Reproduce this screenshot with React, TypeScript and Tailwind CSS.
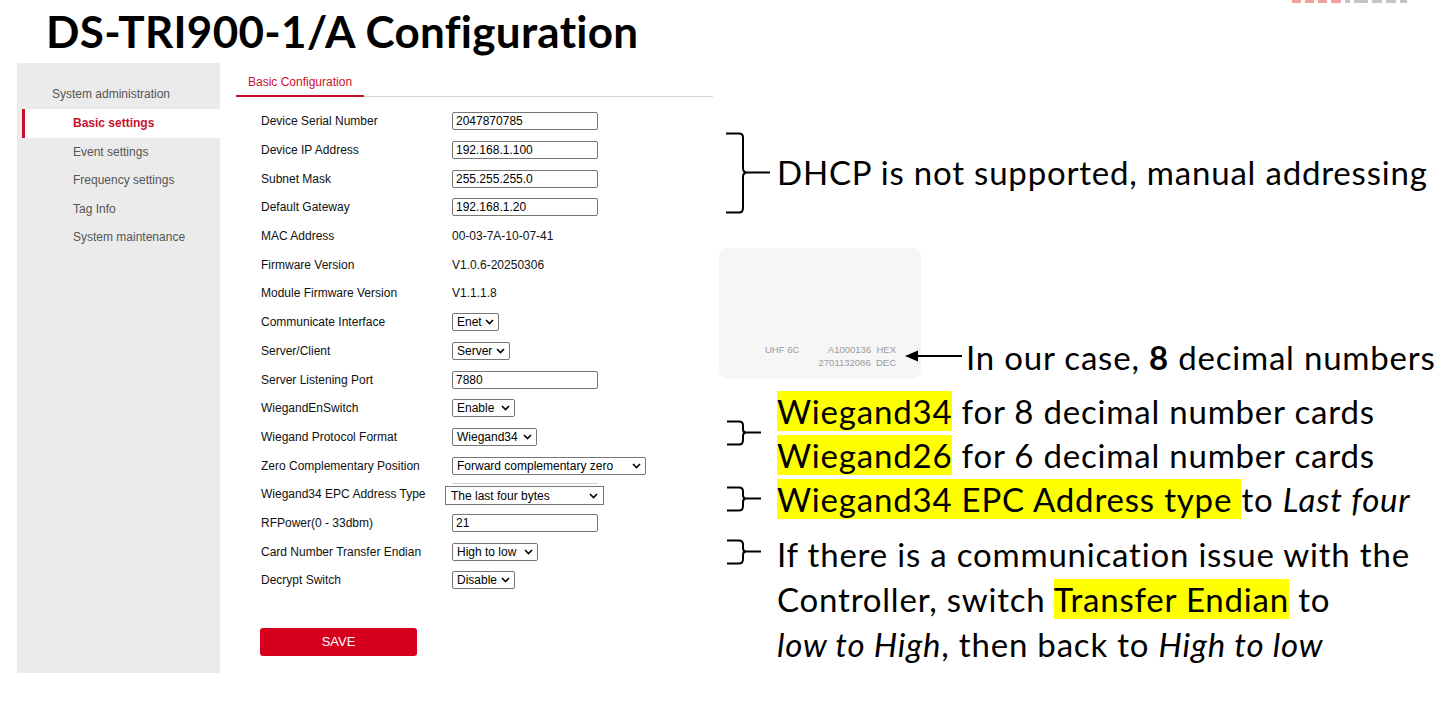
import type { ReactNode } from "react";

const uiFont = { fontFamily: '"Liberation Sans", Arial, sans-serif' };
const slideFont = { fontFamily: 'Lato, "Open Sans", sans-serif' };

type Field =
  | { label: string; kind: "input"; value: string }
  | { label: string; kind: "text"; value: string }
  | { label: string; kind: "select"; value: string; width: number };

const fields: Field[] = [
  { label: "Device Serial Number", kind: "input", value: "2047870785" },
  { label: "Device IP Address", kind: "input", value: "192.168.1.100" },
  { label: "Subnet Mask", kind: "input", value: "255.255.255.0" },
  { label: "Default Gateway", kind: "input", value: "192.168.1.20" },
  { label: "MAC Address", kind: "text", value: "00-03-7A-10-07-41" },
  { label: "Firmware Version", kind: "text", value: "V1.0.6-20250306" },
  { label: "Module Firmware Version", kind: "text", value: "V1.1.1.8" },
  { label: "Communicate Interface", kind: "select", value: "Enet", width: 47 },
  { label: "Server/Client", kind: "select", value: "Server", width: 58 },
  { label: "Server Listening Port", kind: "input", value: "7880" },
  { label: "WiegandEnSwitch", kind: "select", value: "Enable", width: 63 },
  { label: "Wiegand Protocol Format", kind: "select", value: "Wiegand34", width: 85 },
  { label: "Zero Complementary Position", kind: "select", value: "Forward complementary zero", width: 194 },
];

const fieldsAfter: Field[] = [
  { label: "RFPower(0 - 33dbm)", kind: "input", value: "21" },
  { label: "Card Number Transfer Endian", kind: "select", value: "High to low", width: 86 },
  { label: "Decrypt Switch", kind: "select", value: "Disable", width: 63 },
];

const menu = ["Basic settings", "Event settings", "Frequency settings", "Tag Info", "System maintenance"];

// bits of a logo that is cut off at the slide's top edge
const logoBits = [
  { w: 9, c: "bg-[#f3a0a0]" },
  { w: 9, c: "bg-[#f3a0a0]" },
  { w: 9, c: "bg-[#f3a0a0]" },
  { w: 10, c: "bg-[#f3a0a0]" },
  { w: 5, c: "bg-[#c4c4c4]" },
  { w: 14, c: "bg-[#c4c4c4]" },
  { w: 10, c: "bg-[#c4c4c4]" },
  { w: 10, c: "bg-[#c4c4c4]" },
  { w: 7, c: "bg-[#c4c4c4]" },
];

function Chevron() {
  return (
    <svg width="9" height="6" viewBox="0 0 9 6" className="shrink-0">
      <path d="M1 1l3.5 3.5L8 1" fill="none" stroke="#000" strokeWidth="1.6" />
    </svg>
  );
}

function SelectBox({ value, width }: { value: string; width: number }) {
  return (
    <div
      className="flex h-[18px] items-center justify-between rounded-[2px] border border-[#767676] bg-white pl-[4px] pr-[4px] text-[12px] text-black"
      style={{ width }}
    >
      <span className="whitespace-nowrap leading-none">{value}</span>
      <Chevron />
    </div>
  );
}

function FieldRow({ field }: { field: Field }) {
  return (
    <div className="flex h-[28.7px] items-center">
      <div className="w-[216px] shrink-0 pl-[25px] text-[12px] text-[#111]">{field.label}</div>
      {field.kind === "input" ? (
        <div className="flex h-[18px] w-[146px] items-center rounded-[2px] border border-[#767676] pl-[3px] text-[12px] text-black">
          {field.value}
        </div>
      ) : field.kind === "select" ? (
        <SelectBox value={field.value} width={field.width} />
      ) : (
        <div className="text-[12px] text-[#111]">{field.value}</div>
      )}
    </div>
  );
}

function BigBrace() {
  return (
    <svg width="51" height="82" viewBox="0 0 51 82" className="shrink-0">
      <path
        d="M7 1.5H20Q24 1.5 24 5.5V36Q24 40.5 28 40.5Q24 40.5 24 45V76Q24 80.5 20 80.5H7M28 40.5H51"
        fill="none"
        stroke="#000"
        strokeWidth="2"
      />
    </svg>
  );
}

function SmallBrace() {
  return (
    <svg width="42" height="26" viewBox="0 0 42 26" className="shrink-0">
      <path
        d="M8 1.5H20Q24 1.5 24 5.5V9Q24 12.5 27 12.5Q24 12.5 24 16V20Q24 24.5 20 24.5H8M27 12.5H42"
        fill="none"
        stroke="#000"
        strokeWidth="2"
      />
    </svg>
  );
}

function Mark({ children }: { children: ReactNode }) {
  return <span className="bg-[#ffff00]">{children}</span>;
}

export default function App() {
  return (
    <div className="relative h-[724px] w-[1449px] overflow-hidden bg-white" style={uiFont}>
      <div className="flex h-[3px] justify-end gap-[4px] pr-[42px]">
        {logoBits.map((b, i) => (
          <span key={i} className={`h-[3px] ${b.c}`} style={{ width: b.w }} />
        ))}
      </div>

      <h1
        className="h-[60px] pl-[46px] text-[44px] font-bold leading-[56px] tracking-[0.3px] text-black"
        style={slideFont}
      >
        DS-TRI900-1/A Configuration
      </h1>

      <div className="flex">
        {/* screenshot of the web page */}
        <div className="ml-[17px] flex h-[610px] w-[696px] shrink-0">
          <aside className="w-[203px] shrink-0 bg-[#ebebeb] pt-[15px]">
            <div className="flex h-[31px] items-center pl-[35px] text-[12px] text-[#555]">System administration</div>
            {menu.map((item, i) =>
              i === 0 ? (
                <div
                  key={item}
                  className="ml-[5px] flex h-[28.5px] items-center border-l-[3px] border-[#c8102e] bg-white pl-[48px] text-[12px] font-bold text-[#c8102e]"
                >
                  {item}
                </div>
              ) : (
                <div key={item} className="flex h-[28.5px] items-center pl-[56px] text-[12px] text-[#555]">
                  {item}
                </div>
              ),
            )}
          </aside>

          <section className="flex-1 pl-[16px]">
            <div className="flex h-[34px] items-end border-b border-[#d6d6d6]">
              <div className="-mb-px flex h-full items-center border-b-2 border-[#c8102e] px-[12px] pt-[4px] text-[12px] text-[#c8102e]">
                Basic Configuration
              </div>
            </div>

            <div className="mt-[10px]">
              {fields.map((f) => (
                <FieldRow key={f.label} field={f} />
              ))}
              <div className="flex h-[28.7px] items-center">
                <div className="w-[216px] shrink-0 pl-[25px] text-[12px] text-[#111]">Wiegand34 EPC Address Type</div>
                <div className="flex flex-col">
                  <div className="h-px w-[146px] bg-[#d0d0d0]" />
                  <div className="-ml-[7px] mt-[2px] flex h-[19px] w-[159px] items-center justify-between border border-[#767676] pl-[5px] pr-[5px] text-[12px] text-black">
                    <span>The last four bytes</span>
                    <Chevron />
                  </div>
                </div>
              </div>
              {fieldsAfter.map((f) => (
                <FieldRow key={f.label} field={f} />
              ))}
            </div>

            <button className="ml-[24px] mt-[33px] flex h-[28px] w-[157px] items-center justify-center rounded-[3px] bg-[#d6001c] text-[13px] text-white">
              SAVE
            </button>
          </section>
        </div>

        {/* slide notes */}
        <div className="ml-[6px] flex-1 text-[33px] tracking-[0.8px] text-black" style={slideFont}>
          <div className="mt-[69px] flex items-center">
            <BigBrace />
            <div className="ml-[7px] whitespace-nowrap">DHCP is not supported, manual addressing</div>
          </div>

          <div className="mt-[34px] flex items-end">
            <div
              className="flex h-[131px] w-[202px] shrink-0 flex-col justify-end rounded-[8px] bg-[#f6f6f6] pb-[10px] pr-[25px] text-[9.5px] leading-[13px] tracking-normal text-[#9b9b9b]"
              style={uiFont}
            >
              <div className="flex justify-between pl-[46px]">
                <span>UHF 6C</span>
                <span>A1000136&nbsp;&nbsp;HEX</span>
              </div>
              <div className="text-right">2701132086&nbsp;&nbsp;DEC</div>
            </div>
            <svg width="57" height="12" viewBox="0 0 57 12" className="-ml-[16px] mb-[17px] shrink-0">
              <path d="M0 6L13 0.5V11.5Z" fill="#000" />
              <path d="M12 6H57" stroke="#000" strokeWidth="2" />
            </svg>
            <div className="mb-[2px] ml-[4px] whitespace-nowrap leading-[40px]">
              In our case, <b>8</b> decimal numbers
            </div>
          </div>

          <div className="mt-[10px] flex items-center leading-[44px]">
            <div className="w-[58px] shrink-0">
              <SmallBrace />
            </div>
            <div className="whitespace-nowrap">
              <div>
                <Mark>Wiegand34</Mark> for 8 decimal number cards
              </div>
              <div>
                <Mark>Wiegand26</Mark> for 6 decimal number cards
              </div>
            </div>
          </div>

          <div className="flex items-center leading-[44px]">
            <div className="w-[58px] shrink-0">
              <SmallBrace />
            </div>
            <div className="whitespace-nowrap">
              <Mark>Wiegand34 EPC Address type </Mark>to <i>Last four</i>
            </div>
          </div>

          <div className="mt-[11px] flex items-start leading-[45px]">
            <div className="w-[58px] shrink-0 pt-[7px]">
              <SmallBrace />
            </div>
            <div className="whitespace-nowrap">
              <div>If there is a communication issue with the</div>
              <div>
                Controller, switch <Mark>Transfer Endian</Mark> to
              </div>
              <div>
                <i>low to High</i>, then back to <i>High to low</i>
              </div>
            </div>
          </div>
        </div>
      </div>
    </div>
  );
}
